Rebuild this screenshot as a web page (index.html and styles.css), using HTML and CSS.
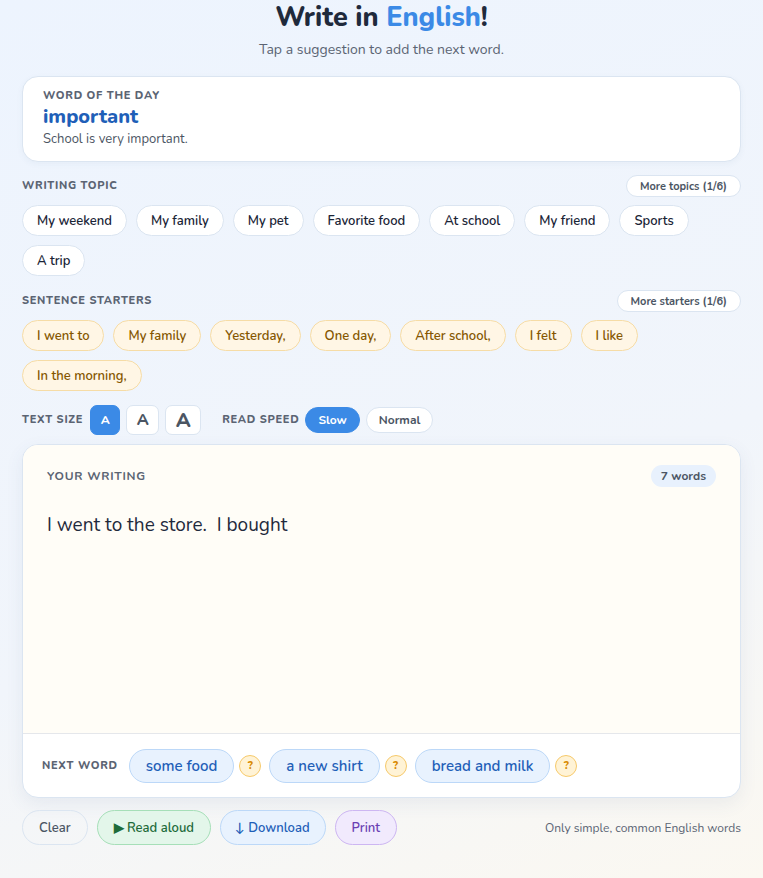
FILE: index.html
```html
<!DOCTYPE html>
<html lang="en">
<head>
    <meta charset="UTF-8">
    <title>Write in English</title>
    <link rel="stylesheet" href="styles.css">
</head>
<body>
<div class="page">
    <header class="head">
        <h1>Write in <span class="accent">English</span>!</h1>
        <p class="sub">Tap a suggestion to add the next word.</p>
    </header>

    <section class="wotd">
        <div class="label">Word of the day</div>
        <div class="wotd-word">important</div>
        <div class="wotd-ex">School is very important.</div>
    </section>

    <div class="row-head">
        <span class="label">Writing topic</span>
        <button class="more">More topics (1/6)</button>
    </div>
    <div class="chips">
        <button class="chip">My weekend</button>
        <button class="chip">My family</button>
        <button class="chip">My pet</button>
        <button class="chip">Favorite food</button>
        <button class="chip">At school</button>
        <button class="chip">My friend</button>
        <button class="chip">Sports</button>
        <button class="chip">A trip</button>
    </div>

    <div class="row-head">
        <span class="label">Sentence starters</span>
        <button class="more">More starters (1/6)</button>
    </div>
    <div class="chips">
        <button class="chip starter">I went to</button>
        <button class="chip starter">My family</button>
        <button class="chip starter">Yesterday,</button>
        <button class="chip starter">One day,</button>
        <button class="chip starter">After school,</button>
        <button class="chip starter">I felt</button>
        <button class="chip starter">I like</button>
        <button class="chip starter">In the morning,</button>
    </div>

    <div class="controls">
        <span class="label">Text size</span>
        <div class="sizes">
            <button class="size s1 active">A</button>
            <button class="size s2">A</button>
            <button class="size s3">A</button>
        </div>
        <span class="label speed-label">Read speed</span>
        <div class="speeds">
            <button class="speed active">Slow</button>
            <button class="speed">Normal</button>
        </div>
    </div>

    <section class="writing">
        <div class="writing-top">
            <div class="writing-head">
                <span class="label">Your writing</span>
                <span class="count">7 words</span>
            </div>
            <div class="text">I went to the store.&nbsp; I bought</div>
        </div>
        <div class="next">
            <span class="label">Next word</span>
            <button class="sugg">some food</button><span class="q">?</span>
            <button class="sugg">a new shirt</button><span class="q">?</span>
            <button class="sugg">bread and milk</button><span class="q">?</span>
        </div>
    </section>

    <footer class="actions">
        <button class="act clear">Clear</button>
        <button class="act read">&#9654; Read aloud</button>
        <button class="act down">&darr; Download</button>
        <button class="act print">Print</button>
        <span class="note">Only simple, common English words</span>
    </footer>
</div>
</body>
</html>
```

FILE: styles.css
```css
* {
    margin: 0;
    padding: 0;
    box-sizing: border-box;
}

html, body {
    height: 100%;
}

body {
    font-family: "Nunito", "Lato", "Noto Sans", sans-serif;
    color: #1f2a3c;
    background: linear-gradient(160deg, #edf4fe 0%, #f1f5fb 60%, #fbf8f1 100%);
}

button {
    font-family: inherit;
    cursor: pointer;
}

.page {
    width: 719px;
    margin: 0 0 0 22px;
}

.head {
    text-align: center;
}

.head h1 {
    font-size: 27px;
    font-weight: 800;
    line-height: 36px;
    color: #1f2a3c;
}

.accent {
    color: #3b8ae6;
}

.sub {
    margin-top: 5px;
    font-size: 14px;
    line-height: 18px;
    color: #5b6473;
}

.label {
    font-size: 11px;
    line-height: 14px;
    font-weight: 800;
    letter-spacing: 0.7px;
    text-transform: uppercase;
    color: #5b6473;
}

.wotd {
    margin-top: 17px;
    background: #fff;
    border: 1px solid #dbe5f1;
    border-radius: 16px;
    padding: 12px 20px 14px;
    box-shadow: 0 2px 6px rgba(60, 90, 140, 0.05);
}

.wotd-word {
    margin-top: 1px;
    font-size: 20px;
    font-weight: 800;
    color: #1f5fb8;
    line-height: 26px;
}

.wotd-ex {
    margin-top: 1px;
    font-size: 13px;
    line-height: 16px;
    color: #4b5563;
}

.row-head {
    display: flex;
    justify-content: space-between;
    align-items: center;
    margin-top: 13px;
}

.chips + .row-head {
    margin-top: 14px;
}

.more {
    height: 22px;
    padding: 0 13px;
    border-radius: 11px;
    border: 1px solid #dbe5f1;
    background: #fff;
    font-size: 11px;
    font-weight: 700;
    color: #4b5563;
}

.chips {
    display: flex;
    flex-wrap: wrap;
    gap: 9px;
    margin-top: 8px;
}

.chip {
    height: 31px;
    padding: 0 14px;
    border-radius: 16px;
    border: 1px solid #dbe5f1;
    background: #fff;
    font-size: 13px;
    font-weight: 600;
    color: #1a2436;
}

.chip.starter {
    background: #fff6e5;
    border-color: #f6dca6;
    color: #855600;
}

.controls {
    display: flex;
    align-items: center;
    margin-top: 14px;
}

.sizes {
    display: flex;
    gap: 6px;
    margin-left: 7px;
}

.size {
    height: 30px;
    border-radius: 7px;
    border: 1px solid #dbe5f1;
    background: #fff;
    font-weight: 800;
    color: #4b5563;
}

.s1 {
    width: 30px;
    font-size: 12px;
}

.s2 {
    width: 33px;
    font-size: 16px;
}

.s3 {
    width: 36px;
    font-size: 20px;
}

.size.active {
    background: #3b8ae6;
    border-color: #3b8ae6;
    color: #fff;
}

.speed-label {
    margin-left: 21px;
}

.speeds {
    display: flex;
    gap: 6px;
    margin-left: 6px;
}

.speed {
    height: 26px;
    padding: 0 12px;
    border-radius: 13px;
    border: 1px solid #dbe5f1;
    background: #fff;
    font-size: 12px;
    font-weight: 700;
    color: #4b5563;
}

.speed.active {
    background: #3b8ae6;
    border-color: #3b8ae6;
    color: #fff;
}

.writing {
    margin-top: 9px;
    border: 1px solid #dbe5f1;
    border-radius: 16px;
    overflow: hidden;
    background: #fff;
    box-shadow: 0 6px 18px rgba(60, 90, 140, 0.08);
}

.writing-top {
    height: 289px;
    background: #fffdf7;
    border-bottom: 1px solid #e5e7eb;
    padding: 20px 24px;
}

.writing-head {
    display: flex;
    justify-content: space-between;
    align-items: center;
}

.writing-head .label {
    font-size: 12px;
    font-weight: 700;
}

.count {
    height: 22px;
    line-height: 22px;
    padding: 0 10px;
    border-radius: 11px;
    background: #e8f1fd;
    font-size: 12px;
    font-weight: 700;
    color: #4b5563;
}

.text {
    margin-top: 25px;
    font-size: 19px;
    line-height: 26px;
    color: #1f2a3c;
}

.next {
    display: flex;
    align-items: center;
    height: 63px;
    padding: 0 19px;
}

.next .label {
    margin-right: 11px;
}

.sugg {
    height: 34px;
    padding: 0 16px;
    border-radius: 17px;
    border: 1px solid #bcd8f8;
    background: #e8f2fe;
    font-size: 15px;
    font-weight: 600;
    color: #1f5fb8;
}

.q {
    width: 22px;
    height: 22px;
    margin: 0 8px 0 5px;
    border-radius: 50%;
    border: 1px solid #f6c96a;
    background: #fff3d6;
    color: #d98a00;
    font-size: 11px;
    font-weight: 800;
    display: flex;
    align-items: center;
    justify-content: center;
}

.actions {
    display: flex;
    align-items: center;
    gap: 9px;
    margin-top: 12px;
}

.act {
    height: 35px;
    padding: 0 16px;
    border-radius: 18px;
    border: 1px solid #dbe5f1;
    background: transparent;
    font-size: 13px;
    font-weight: 600;
    color: #4b5563;
}

.act.read {
    background: #e3f6ea;
    border-color: #a6dfb8;
    color: #1e6b3a;
}

.act.down {
    padding: 0 15px 0 14px;
    background: #e8f2fe;
    border-color: #bcd8f8;
    color: #1f5fb8;
}

.act.print {
    background: #f1eafd;
    border-color: #cdb6f2;
    color: #6b3fb3;
}

.note {
    margin-left: auto;
    font-size: 12px;
    color: #5b6473;
}
```
